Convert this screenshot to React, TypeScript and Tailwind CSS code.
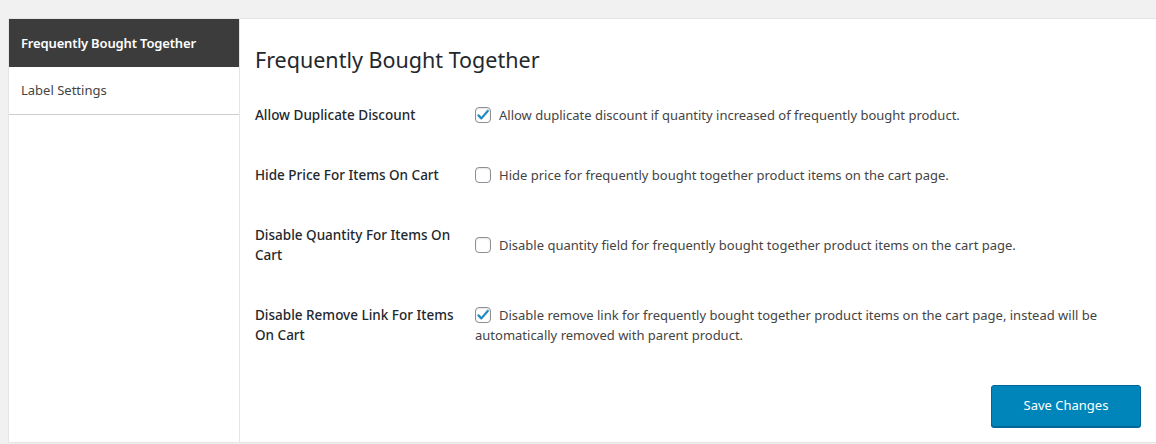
const rows = [
  {
    label: "Allow Duplicate Discount",
    text: "Allow duplicate discount if quantity increased of frequently bought product.",
    checked: true,
  },
  {
    label: "Hide Price For Items On Cart",
    text: "Hide price for frequently bought together product items on the cart page.",
    checked: false,
  },
  {
    label: "Disable Quantity For Items On Cart",
    text: "Disable quantity field for frequently bought together product items on the cart page.",
    checked: false,
  },
  {
    label: "Disable Remove Link For Items On Cart",
    text: "Disable remove link for frequently bought together product items on the cart page, instead will be automatically removed with parent product.",
    checked: true,
  },
];

function Checkbox({ checked }: { checked: boolean }) {
  return (
    <span className="float-left mt-[2px] mr-[8px] flex h-[16px] w-[16px] items-center justify-center rounded-[4px] border border-[#8c8f94] bg-white shadow-[inset_0_1px_2px_rgba(0,0,0,0.1)]">
      {checked && (
        <svg viewBox="0 0 20 20" className="h-[14px] w-[14px]">
          <path
            d="M3.5 10.5l4.2 4.3L16.8 4.2"
            fill="none"
            stroke="#1e8cbe"
            strokeWidth="3.2"
            strokeLinecap="round"
            strokeLinejoin="round"
          />
        </svg>
      )}
    </span>
  );
}

export default function App() {
  return (
    <div
      className="min-h-[444px] bg-[#f1f1f1] pt-[18px] pl-[8px] text-[13px] text-[#444]"
      style={{ fontFamily: "'Noto Sans', sans-serif" }}
    >
      <div className="flex border-t border-l border-b border-[#e5e5e5] bg-white">

        {/* Sidebar */}
        <div className="w-[231px] shrink-0 border-r border-[#e5e5e5]">
          <div className="h-[48px] bg-[#3c3c3c] px-[12px] pt-[1px] flex items-center font-semibold tracking-[-0.15px] text-white">
            Frequently Bought Together
          </div>
          <div className="h-[48px] px-[12px] pt-[1px] flex items-center border-b border-[#ccc] text-[#444]">
            Label Settings
          </div>
        </div>

        {/* Main */}
        <div className="flex-1 pl-[15px] pr-[15px] pt-[22px] pb-[15px]">
          <h2 className="text-[21.5px] leading-[30px] text-[#23282d] mb-[10px] mt-[4px]">
            Frequently Bought Together
          </h2>

          <div>
            {rows.map((row) => (
              <div key={row.label} className="flex items-center py-[20px]">
                <div className="w-[200px] mr-[20px] shrink-0 self-start text-[13.5px] leading-[20px] font-medium text-[#23282d]">
                  {row.label}
                </div>
                <div className="leading-[20px]">
                  <Checkbox checked={row.checked} />
                  {row.text}
                </div>
              </div>
            ))}
          </div>

          <div className="flex justify-end mt-[20px]">
            <button className="h-[42px] w-[150px] rounded-[3px] border border-[#006799] bg-[#0085ba] text-white text-[13px] shadow-[0_1px_0_#006799]">
              Save Changes
            </button>
          </div>
        </div>

      </div>
    </div>
  );
}
